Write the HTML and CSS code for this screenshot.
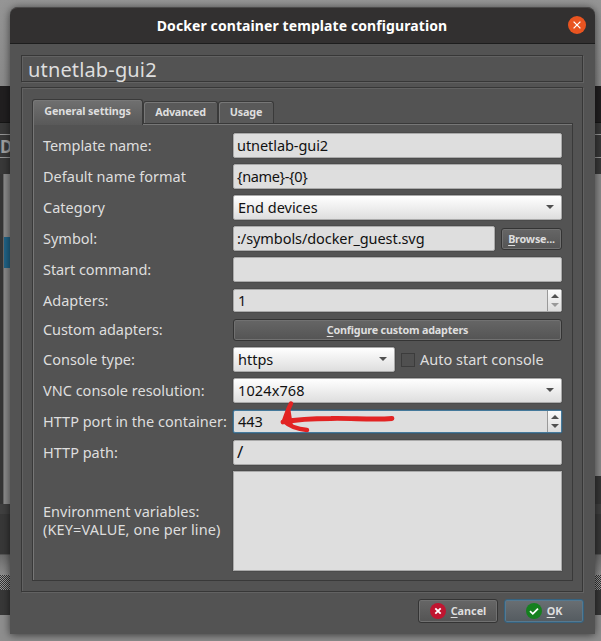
FILE: index.html
```html
<!DOCTYPE html>
<html lang="en">
<head>
<meta charset="utf-8">
<title>Docker container template configuration</title>
<link rel="stylesheet" href="styles.css">
</head>
<body>
<div class="desktop">
  <div class="backdrop">
    <div class="sky"></div>
    <div class="appbar"></div>
    <div class="toolbar"><div class="toolbox">D</div></div>
    <div class="content">
      <div class="list"><div class="selected"></div></div>
      <div class="side"></div>
    </div>
    <div class="footer"></div>
    <div class="gap"></div>
    <div class="checker"></div>
    <div class="dock"></div>
    <div class="floor"></div>
  </div>
  <main class="window">
    <header class="titlebar">
      <h1 class="title">Docker container template configuration</h1>
      <svg class="close" viewBox="0 0 18 18"><circle cx="9" cy="9" r="9" fill="#e95420"/><path d="M5.6 5.6 12.4 12.4M12.4 5.6 5.6 12.4" stroke="#fff" stroke-width="1.3"/></svg>
    </header>
    <div class="body">
      <div class="groove heading"><span>utnetlab-gui2</span></div>
      <section class="groove panel">
        <nav class="tabs">
          <span class="tab active">General settings</span>
          <span class="tab adv">Advanced</span>
          <span class="tab usage">Usage</span>
        </nav>
        <div class="form">
          <label class="tight">Template name:</label>
          <div class="field"><span class="tight">utnetlab-gui2</span></div>
          <label>Default name format</label>
          <div class="field"><span class="tighter">{name}-{0}</span></div>
          <label>Category</label>
          <div class="field combo"><span>End devices</span><i class="down"></i></div>
          <label>Symbol:</label>
          <div class="pair">
            <div class="field"><span class="tight">:/symbols/docker_guest.svg</span></div>
            <button class="btn browse"><span><u>B</u>rowse...</span></button>
          </div>
          <label class="tight">Start command:</label>
          <div class="field"></div>
          <label>Adapters:</label>
          <div class="field spin"><span>1</span><div class="steps"><i class="up"></i><i class="down dim"></i></div></div>
          <label class="tight">Custom adapters:</label>
          <button class="btn configure"><span><u>C</u>onfigure custom adapters</span></button>
          <label>Console type:</label>
          <div class="pair console">
            <div class="field combo"><span>https</span><i class="down"></i></div>
            <div class="check"><i class="box"></i><span>Auto start console</span></div>
          </div>
          <label>VNC console resolution:</label>
          <div class="field combo"><span class="loose">1024x768</span><i class="down"></i></div>
          <label>HTTP port in the container:</label>
          <div class="field spin focus"><span>443</span><div class="steps"><i class="up"></i><i class="down"></i></div>
            <svg class="arrow" viewBox="0 0 120 36"><g fill="none" stroke-linecap="round" stroke-linejoin="round"><path d="M117 18.5C98 20 76 18 56 18.5C38 18.500 24 19 8 22" stroke="#e22323" stroke-width="4.800"/><path d="M16 3.500C12 11 11 16 9 21C14 26 22 29 32 30" stroke="#e22323" stroke-width="4.500"/><path d="M15 7 10 21 18 26Z" fill="#e22323"/></g></svg>
          </div>
          <label>HTTP path:</label>
          <div class="field"><span class="slash">/</span></div>
          <label><span class="line">Environment variables:</span><span class="line loose">(KEY=VALUE, one per line)</span></label>
          <div class="field area"></div>
        </div>
      </section>
      <footer class="actions">
        <button class="btn cancel"><svg viewBox="0 0 16 16"><circle cx="8" cy="8" r="8" fill="#c01530"/><path d="M5.300 5.300 10.700 10.700M10.700 5.300 5.300 10.700" stroke="#fff" stroke-width="1.800"/></svg><span><u>C</u>ancel</span></button>
        <button class="btn ok"><svg viewBox="0 0 16 16"><circle cx="8" cy="8" r="8" fill="#15801f"/><path d="M4 8.200 6.800 10.800 12 5.600" fill="none" stroke="#fff" stroke-width="1.800"/></svg><span><u>O</u>K</span></button>
      </footer>
    </div>
  </main>
</div>
</body>
</html>
```
FILE: styles.css
```css
* { box-sizing: border-box; }
body { margin: 0; font: 14.5px/18px "Noto Sans", sans-serif; color: #dedede; overflow: hidden; }
.desktop { display: grid; width: 601px; height: 641px; background: #828282; }
.backdrop, .window { grid-area: 1 / 1; }
.backdrop { display: flex; flex-direction: column; }
.sky { height: 86px; background: linear-gradient(#959595, #8a8a8a); }
.appbar { height: 37px; background: #211f20; border-bottom: 1px solid #161616; }
.toolbar { height: 51px; padding-top: 11px; background: #393939; }
.toolbox { height: 24px; border: solid #959595; border-width: 1px 0; font-weight: bold; font-size: 17px; line-height: 24px; color: #a0a0a0; }
.content { height: 330px; display: flex; justify-content: space-between; background: #363636; padding-left: 3px; }
.list { width: 100px; background: #8c8c8c; padding-top: 63px; border-left: 1px solid #686868; }
.selected { height: 31px; background: #206488; }
.side { width: 100px; height: 302px; background: #8a8a8a; }
.footer { height: 51px; background: #383838; border-top: 10px solid #404040; border-bottom: 1px solid #555; }
.gap { height: 20px; background: linear-gradient(#6c6c6c, #8c8c8c); }
.checker { height: 15px; background: repeating-conic-gradient(#999 0 25%, #333 0 50%) 0 0 / 2px 2px; }
.dock { height: 25px; background: #383838; }
.floor { flex: 1; background: #8e8e8e; }
.window { display: flex; flex-direction: column; width: 585px; height: 627px; margin: 7px 0 0 10px; background: #535353; border-radius: 8px 8px 0 0; box-shadow: 0 1px 9px #0009; }
.titlebar { flex: none; height: 37px; display: flex; align-items: center; padding-right: 9px; background: #323030; border-top: 1px solid #4b4a4a; border-bottom: 1px solid #1d1d1d; border-radius: 8px 8px 0 0; }
.title { flex: 1; margin: 0 0 0 26px; font-size: 14px; letter-spacing: .09px; text-align: center; line-height: 18px; color: #fff; white-space: nowrap; }
.close { flex: none; width: 18px; height: 18px; margin-bottom: 1px; }
.body { flex: 1; padding: 11px 11px 0; }
.groove { border: 1px solid #373737; box-shadow: inset 1px 1px #626262, 1px 1px #626262; }
.heading { height: 27px; padding-left: 6px; font-size: 20px; line-height: 28px; letter-spacing: .15px; width: 562px; }
.panel { height: 505px; width: 562px; margin-top: 5px; padding: 11px 10px; }
.tabs { display: flex; align-items: flex-end; height: 24px; font-size: 10.8px; letter-spacing: -.13px; font-weight: bold; }
.tab { height: 22px; line-height: 19px; display: flex; justify-content: center; border: 1px solid #3a3a3a; border-bottom: 0; border-radius: 3px 3px 0 0; box-shadow: inset 1px 1px #777; background: #595959; white-space: nowrap; }
.active { position: relative; width: 111px; height: 26px; line-height: 21px; margin-bottom: -2px; background: linear-gradient(#707070, #595959); }
.adv { width: 75px; letter-spacing: -.3px; }
.usage { width: 56px; }
.form { height: 458px; width: 541px; padding: 9px 10px 0; border: 1px solid #393939; box-shadow: inset 1px 1px #777; display: grid; grid-template-columns: 190px 329px; grid-template-rows: 25px 25px 25px 25px 25px 25px 22px 25px 25px 25px 25px 100px; row-gap: 6px; align-items: center; }
.form label { white-space: nowrap; position: relative; top: -1px; }
.line { display: block; }
.tight { letter-spacing: -.07px; }
.tighter { letter-spacing: -.35px; }
.loose { letter-spacing: .12px; }
.field { position: relative; width: 100%; min-width: 0; height: 100%; display: flex; align-items: center; padding: 0 4px 1px 3px; background: #dedede; color: #111; border: 1px solid #aaa; border-radius: 2px; box-shadow: 0 0 0 .5px #454545; white-space: nowrap; }
.combo { padding: 0 7px 1px 4px; justify-content: space-between; background: linear-gradient(#fff, #dedede); }
.slash { font-size: 17px; }
.down, .up { width: 0; height: 0; border: solid transparent; border-width: 4px 4px 0; border-top-color: #505050; }
.up { border-width: 0 4px 4px; border-bottom-color: #505050; }
.dim { border-top-color: #999; }
.pair { display: grid; grid-template-columns: 262px 61px; column-gap: 6px; height: 100%; align-items: center; }
.console { grid-template-columns: 162px 155px; }
.check { display: flex; align-items: center; gap: 5px; white-space: nowrap; }
.check span { margin-bottom: 2px; }
.box { flex: none; width: 14px; height: 14px; border: 1px solid #3c3c3c; background: #505050; }
.spin { height: 23px; padding: 0 0 0 4px; justify-content: space-between; }
.spin span { margin-bottom: 2px; }
.steps { width: 14px; height: 21px; display: flex; flex-direction: column; align-items: center; justify-content: space-evenly; background: linear-gradient(#fafafa, #dcdcdc); border-left: 1px solid #999; }
.focus { border-color: #45799b; box-shadow: 0 0 0 .5px #315d7a; }
.arrow { position: absolute; left: 41px; top: -11px; width: 120px; height: 36px; }
.area { border-radius: 0; }
.btn { height: 22px; padding: 0; border: 1px solid #343434; border-radius: 3px; box-shadow: inset 0 0 0 1px #717171; background: linear-gradient(#666, #545454); color: #dedede; font: bold 10.8px/18px "Noto Sans", sans-serif; letter-spacing: -.2px; white-space: nowrap; display: flex; align-items: center; justify-content: center; gap: 5px; }
.btn u { text-underline-offset: 2px; }
.actions { display: flex; justify-content: flex-end; gap: 6px; padding-top: 7px; }
.actions .btn { width: 80px; height: 24px; letter-spacing: 0; }
.actions svg { width: 16px; height: 16px; }
.actions .ok { border-color: #35627f; box-shadow: inset 0 0 0 1px #557990; background: linear-gradient(#6a6f73, #545b60); }
```
